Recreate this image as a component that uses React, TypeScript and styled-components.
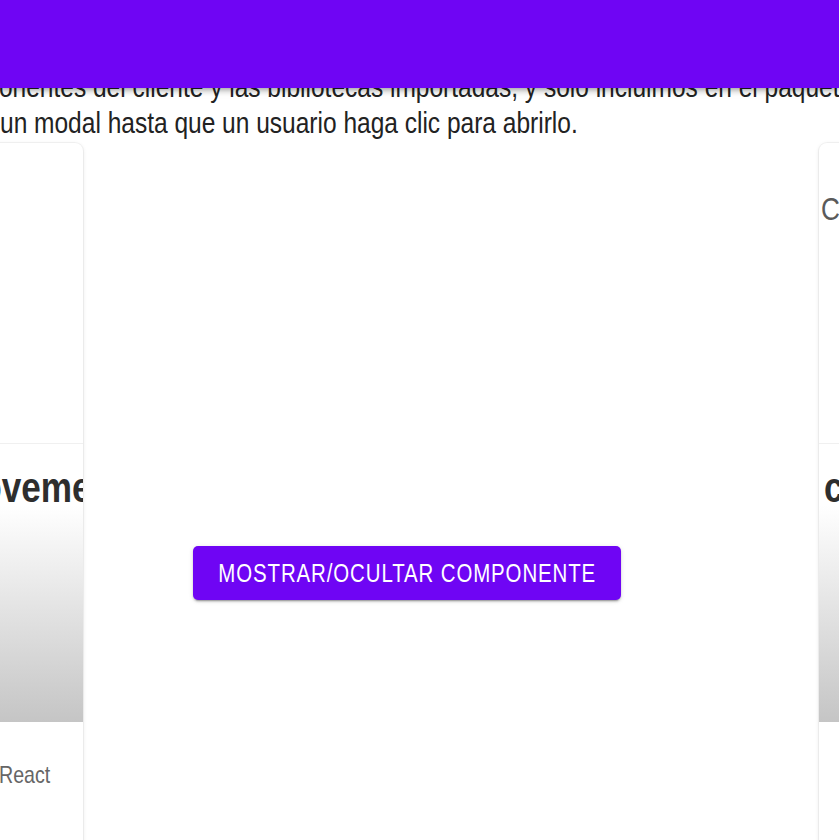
import React from "react";
import styled, { createGlobalStyle } from "styled-components";

const FONT = '"Liberation Sans", Arial, sans-serif';
const PURPLE = "#6f05f4";
const SQUEEZE = 0.817;

const Global = createGlobalStyle`
  html, body {
    margin: 0;
    padding: 0;
    background: #ffffff;
    overflow: hidden;
  }
  body {
    font-family: ${FONT};
    width: 839px;
    height: 840px;
  }
`;

const AppBar = styled.header`
  position: fixed;
  top: 0;
  left: 0;
  right: 0;
  height: 88px;
  background: ${PURPLE};
  box-shadow: 0 2px 4px -1px rgba(0, 0, 0, 0.2), 0 4px 5px 0 rgba(0, 0, 0, 0.14),
    0 1px 10px 0 rgba(0, 0, 0, 0.12);
  z-index: 10;
`;

const Main = styled.main`
  padding-top: 69px;
  width: 839px;
  overflow: hidden;
`;

const Paragraph = styled.p`
  margin: 0;
  font-size: 30px;
  line-height: 36px;
  color: #222222;
`;

const Line = styled.span<{ $indent?: number }>`
  display: block;
  white-space: nowrap;
  margin-left: ${(p) => p.$indent ?? 0}px;
  transform: scaleX(${SQUEEZE});
  transform-origin: left center;
`;

const Carousel = styled.div`
  display: flex;
  align-items: flex-start;
  margin-top: 2px;
  margin-left: -54px;
`;

const Card = styled.article<{ $width: number }>`
  flex: 0 0 ${(p) => p.$width}px;
  width: ${(p) => p.$width}px;
  height: 720px;
  background: #ffffff;
  border-radius: 8px;
  overflow: hidden;
  box-shadow: 0 0 0 1px rgba(0, 0, 0, 0.04), 0 1px 4px rgba(0, 0, 0, 0.1);
  display: flex;
  flex-direction: column;
`;

const Media = styled.div<{ $pad: number }>`
  height: 300px;
  box-sizing: border-box;
  padding: 46px 0 0 ${(p) => p.$pad}px;
  font-size: 32px;
  line-height: 40px;
  color: #5a5a5a;
  white-space: nowrap;
`;

const Squeezed = styled.span`
  display: inline-block;
  white-space: nowrap;
  transform: scaleX(${SQUEEZE});
  transform-origin: left center;
`;

const TitleArea = styled.div<{ $pad: number }>`
  height: 279px;
  box-sizing: border-box;
  border-top: 1px solid #f0f0f0;
  padding: 19px 0 0 ${(p) => p.$pad}px;
  background: linear-gradient(180deg, #ffffff 22%, #c5c5c5 100%);
`;

const Title = styled.h3`
  margin: 0;
  font-size: 43px;
  line-height: 48px;
  font-weight: 700;
  color: #2e2e2e;
  white-space: nowrap;
`;

const Footer = styled.div<{ $pad: number }>`
  padding: 37px 0 0 ${(p) => p.$pad}px;
  font-size: 24px;
  line-height: 32px;
  color: #666666;
  white-space: nowrap;
`;

const Stage = styled.section`
  flex: 0 0 736px;
  box-sizing: border-box;
  padding: 403px 0 0 110px;
`;

const Button = styled.button`
  display: flex;
  align-items: center;
  justify-content: center;
  width: 428px;
  height: 54px;
  padding: 0;
  border: 0;
  border-radius: 5px;
  background: ${PURPLE};
  color: #ffffff;
  font-family: ${FONT};
  font-size: 25px;
  letter-spacing: 1.1px;
  text-transform: uppercase;
  cursor: pointer;
  box-shadow: 0 3px 1px -2px rgba(0, 0, 0, 0.2), 0 2px 2px 0 rgba(0, 0, 0, 0.14),
    0 1px 5px 0 rgba(0, 0, 0, 0.12);
`;

const ButtonLabel = styled.span`
  flex: 0 0 auto;
  white-space: nowrap;
  transform: scaleX(${SQUEEZE});
  transform-origin: center center;
`;

export default function App() {
  const [visible, setVisible] = React.useState(false);
  return (
    <>
      <Global />
      <AppBar />
      <Main>
        <Paragraph>
          <Line $indent={-61}>
            componentes del cliente y las bibliotecas importadas, y solo incluimos en el paquete
            de cliente lo que necesitamos
          </Line>
          <Line>un modal hasta que un usuario haga clic para abrirlo.</Line>
        </Paragraph>
        <Carousel>
          <Card $width={137}>
            <Media $pad={5} />
            <TitleArea $pad={5}>
              <Title>
                <Squeezed>Movement</Squeezed>
              </Title>
            </TitleArea>
            <Footer $pad={53}>
              <Squeezed>React</Squeezed>
            </Footer>
          </Card>
          <Stage>
            <Button type="button" onClick={() => setVisible(!visible)}>
              <ButtonLabel>Mostrar/Ocultar componente</ButtonLabel>
            </Button>
          </Stage>
          <Card $width={300}>
            <Media $pad={2}>
              <Squeezed>Cargando imagen</Squeezed>
            </Media>
            <TitleArea $pad={5}>
              <Title>
                <Squeezed>código dividido</Squeezed>
              </Title>
            </TitleArea>
            <Footer $pad={55}>
              <Squeezed>React</Squeezed>
            </Footer>
          </Card>
        </Carousel>
      </Main>
    </>
  );
}
